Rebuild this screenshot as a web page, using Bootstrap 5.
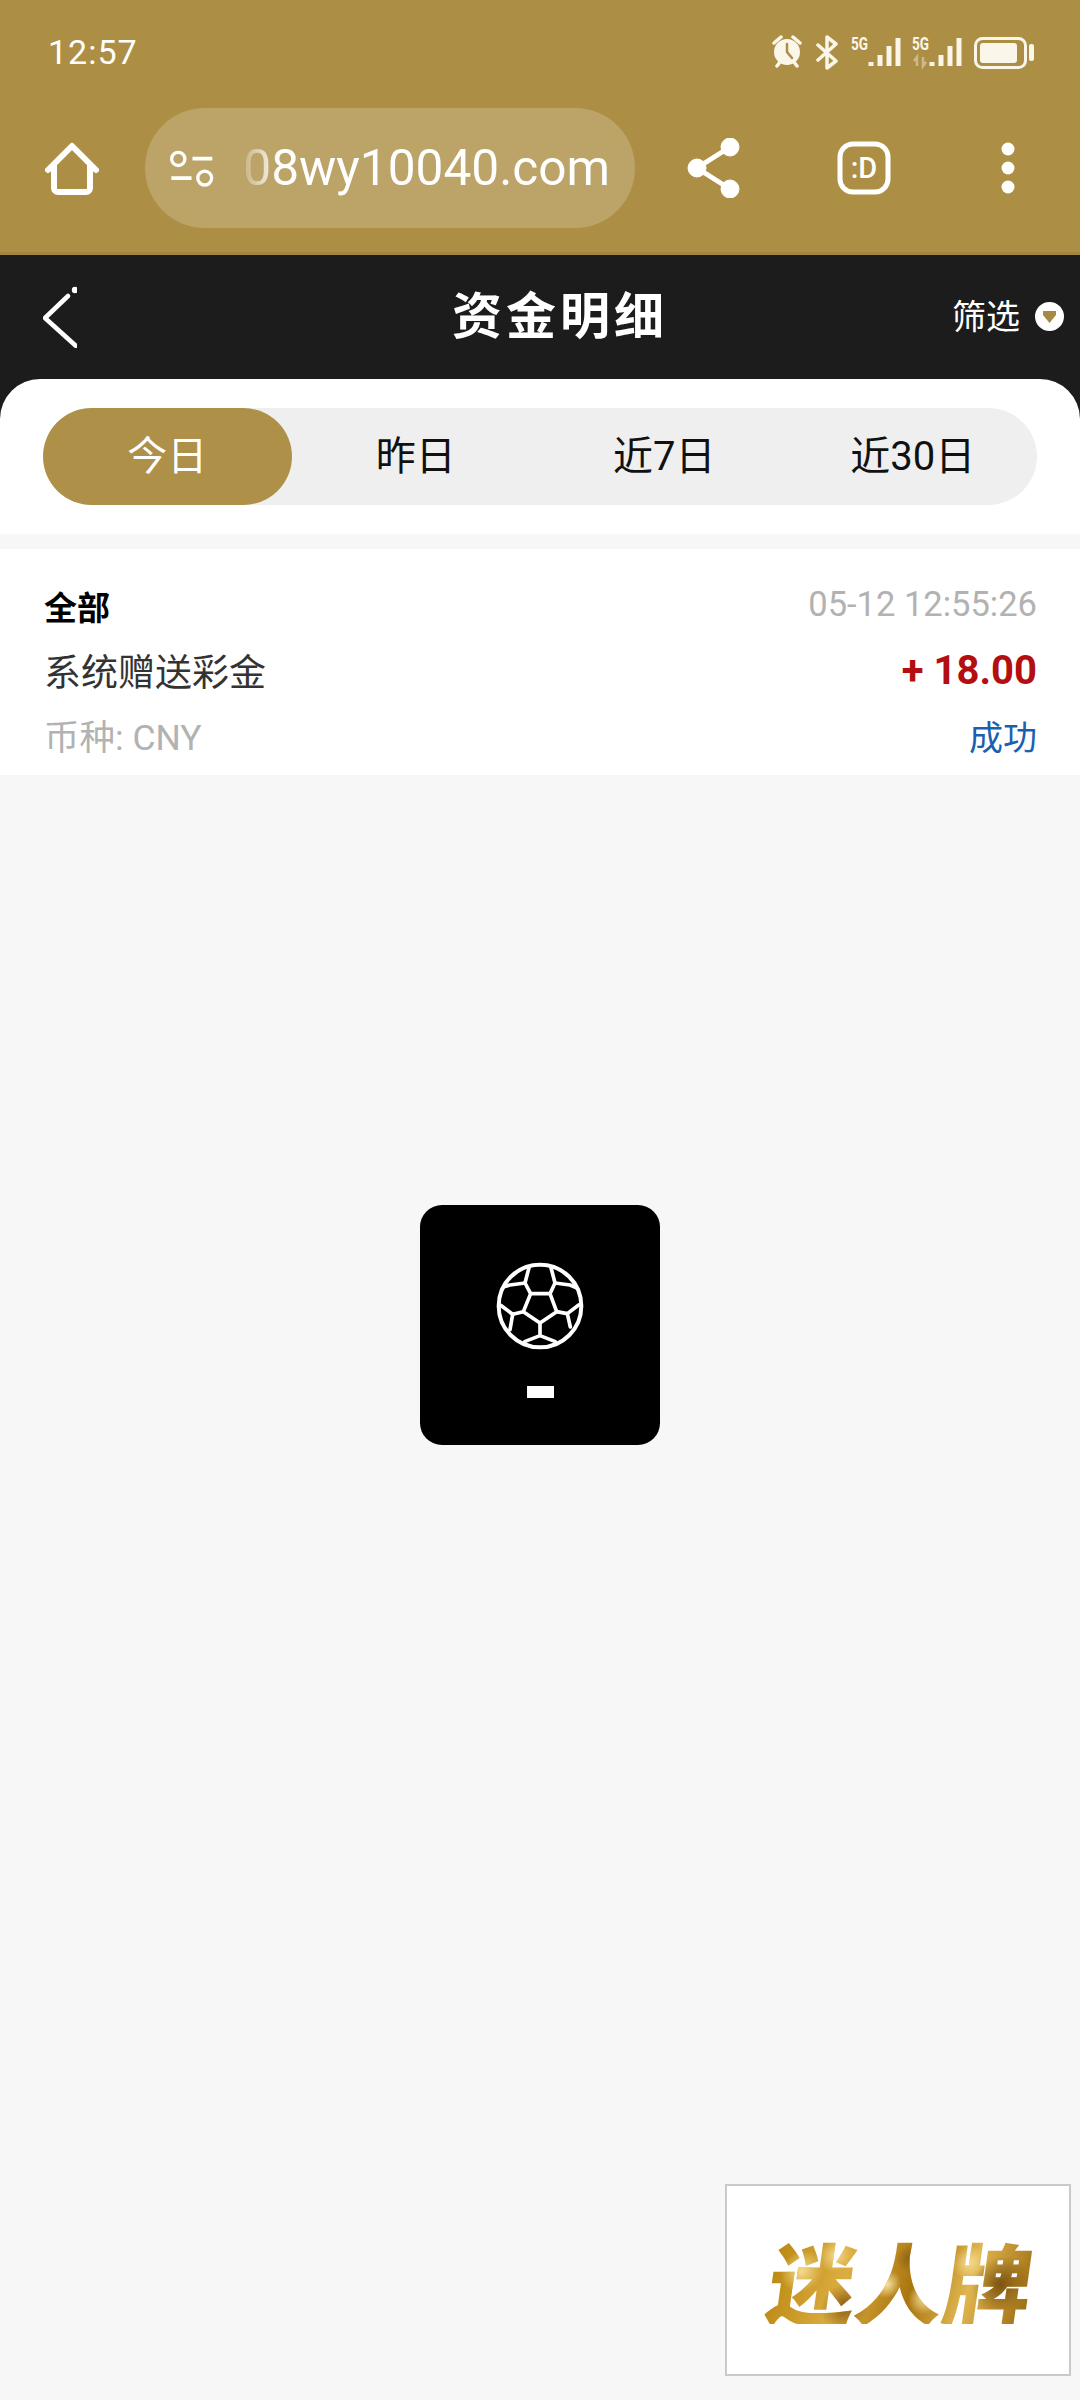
<!DOCTYPE html>
<html lang="zh-CN">
  <head>
    <meta charset="UTF-8" />
    <meta name="viewport" content="width=device-width, initial-scale=1.0" />
    <title>资金明细</title>
    <link href="https://cdn.jsdelivr.net/npm/bootstrap@5.3.3/dist/css/bootstrap.min.css" rel="stylesheet" />
    <style>
      body {
        width: 1080px;
        min-height: 2400px;
        background: #f7f7f7;
        font-family: Roboto, "Noto Sans CJK SC", sans-serif;
        position: relative;
      }
      .gold-top { background: #ad8e45; border-bottom: 3px solid #a38540; color: #fff; }
      .status-row { height: 84px; padding: 36px 46px 0 48px; }
      .clock { font-size: 34px; line-height: 32px; letter-spacing: 1px; }
      .sig-icons { margin-top: -8px; }
      .tool-row { height: 168px; padding: 0 0 0 45px; }
      .url-pill {
        width: 490px; height: 120px; margin-left: 46px; padding: 0 25px 0 23px;
        background: #bca468; border-radius: 60px;
      }
      .url-text {
        width: 372px; margin-left: 24px; font-size: 49.6px; white-space: nowrap; text-align: right;
        -webkit-mask-image: linear-gradient(90deg, #000 0, rgba(0,0,0,.25) 8px, #000 40px);
        mask-image: linear-gradient(90deg, #000 0, rgba(0,0,0,.25) 8px, #000 40px);
      }
      .ic-share { margin-left: 52px; }
      .ic-face { margin-left: 96px; }
      .ic-dots { margin-left: 110px; }
      .head-block { background: #1c1c1c; }
      .title-row { height: 124px; padding: 0 16px 1px 43px; color: #fff; }
      .title-text { margin: 0 0 0 375px; font-size: 50px; font-weight: 700; letter-spacing: 4px; line-height: 1; }
      .filter-text { font-size: 34px; line-height: 1; }
      .filter-dot {
        width: 29px; height: 29px; margin-left: 15px; background: #fff; border-radius: 50%;
      }
      .tabs-wrap { background: #fff; border-radius: 40px 40px 0 0; padding: 29px 43px; }
      .tabs-bar { background: #efefef; border-radius: 49px; height: 97px; }
      .tabs-bar .nav-link {
        height: 97px; line-height: 97px; padding: 0; border-radius: 49px;
        color: #111; font-size: 40px;
      }
      .tabs-bar .nav-link.active { background: #ae9048; color: #fff; }
      .record-row { background: #fff; margin-top: 15px; padding: 27px 43px 4px 44px; height: 226px; }
      .rec-line { height: 65px; }
      .rec-name { font-size: 33px; font-weight: 700; color: #000; }
      .rec-time { font-size: 34.5px; color: #b2b2b2; margin-top: -8px; }
      .rec-desc { font-size: 37px; color: #333; }
      .rec-amount { font-size: 40px; font-weight: 700; color: #b30e10; margin-top: -6px; }
      .rec-coin { font-size: 35.5px; color: #b2b2b2; }
      .rec-state { font-size: 34px; color: #1a5fb0; }
      .load-toast {
        position: absolute; left: 420px; top: 1205px; width: 240px; height: 240px;
        background: #000; border-radius: 22px; padding-top: 56px;
      }
      .load-dash { width: 27px; height: 12px; background: #fff; margin-top: 35px; }
      .ad-box {
        position: absolute; left: 725px; top: 2184px; width: 346px; height: 192px;
        background: #fff; border: 2px solid #c9c9c9; padding-left: 6px;
      }
      .ad-text {
        font-family: "Noto Sans CJK SC", sans-serif; font-size: 88px; font-weight: 900; line-height: 1;
        transform: skewX(-8deg);
        background:
          radial-gradient(circle at 12% 40%, #f6dc8e 0, transparent 9%),
          radial-gradient(circle at 24% 22%, #f3d98c 0, transparent 8%),
          radial-gradient(circle at 45% 55%, #f8e3a0 0, transparent 9%),
          radial-gradient(circle at 60% 70%, #f8e3a0 0, transparent 10%),
          radial-gradient(circle at 75% 30%, #f6dc8e 0, transparent 8%),
          radial-gradient(circle at 88% 55%, #7d5310 0, transparent 12%),
          radial-gradient(circle at 30% 80%, #8a5c12 0, transparent 12%),
          radial-gradient(circle at 52% 25%, #8f6414 0, transparent 9%),
          linear-gradient(100deg, #b8860f, #dcae42 30%, #a9740e 55%, #e0b650 75%, #9a6a10);
        -webkit-background-clip: text;
        background-clip: text;
        color: transparent;
      }
    </style>
  </head>
  <body>
    <div class="gold-top">
      <div class="status-row d-flex justify-content-between align-items-start">
        <div class="clock">12:57</div>
        <!-- alarm, bluetooth, two sims, battery -->
        <svg class="sig-icons" width="262" height="42" viewBox="772 28 262 42" fill="none">
          <g stroke="#fbf6ea" stroke-linecap="round">
            <circle cx="787" cy="52" r="13" fill="#fbf6ea" stroke="none" />
            <path d="M787 44v8l5 6" stroke="#ad8e45" stroke-width="2.5" />
            <path d="M774 43l7-6M800 43l-7-6M777 66l3-4M797 66l-3-4" stroke-width="3.5" />
            <path d="M818 45l18 16-9 7V37l9 7-18 16" stroke-width="3.5" stroke-linejoin="round" />
            <path d="M871 62v4M880 55v11M889 46v20M898 38v28" stroke-width="5" stroke-linecap="butt" />
            <path d="M932 62v4M941 55v11M950 46v20M959 38v28" stroke-width="5" stroke-linecap="butt" />
          </g>
          <text x="851" y="50" fill="#fbf6ea" font-size="18" font-weight="700" font-family="Roboto" textLength="17" lengthAdjust="spacingAndGlyphs">5G</text>
          <text x="912" y="50" fill="#fbf6ea" font-size="18" font-weight="700" font-family="Roboto" textLength="17" lengthAdjust="spacingAndGlyphs">5G</text>
          <path d="M917 66v-9l-3 4M923 57v9l3-4" stroke="#cdb98a" stroke-width="2.5" />
          <rect x="975.5" y="38.5" width="50" height="29" rx="7" stroke="#fbf6ea" stroke-width="3" />
          <rect x="980" y="43" width="37" height="20" rx="3" fill="#fbf6ea" />
          <rect x="1029" y="44" width="5" height="17" rx="2" fill="#fbf6ea" />
        </svg>
      </div>
      <div class="tool-row d-flex align-items-center">
        <svg width="54" height="55" viewBox="0 0 54 55" fill="none" stroke="#fff" stroke-linecap="round" stroke-linejoin="round">
          <path d="M3 29L27 5l24 24" stroke-width="6" />
          <path d="M9 25v22a4 4 0 0 0 4 4h28a4 4 0 0 0 4-4V25" stroke-width="6" />
        </svg>
        <div class="url-pill d-flex align-items-center flex-shrink-0">
          <svg width="47" height="39" viewBox="505 175 140 118" fill="none" stroke="#fff" class="flex-shrink-0">
            <circle cx="535" cy="205" r="20" stroke-width="10" />
            <circle cx="615" cy="263" r="21" stroke-width="10" />
            <path d="M578 204h60M514 263h61" stroke-width="11" />
          </svg>
          <div class="url-text">08wy10040.com</div>
        </div>
        <svg class="ic-share" width="54" height="60" viewBox="0 0 54 60" fill="#fff" stroke="#fff">
          <path d="M43 9L10 30l33 21" fill="none" stroke-width="5" />
          <circle cx="43" cy="9" r="9" />
          <circle cx="10" cy="30" r="9" />
          <circle cx="43" cy="51" r="9" />
        </svg>
        <svg class="ic-face" width="54" height="54" viewBox="0 0 54 54" fill="none">
          <rect x="3" y="3" width="48" height="48" rx="13" stroke="#fff" stroke-width="5" />
          <text x="27" y="37" text-anchor="middle" fill="#fff" font-size="29" font-weight="500" font-family="Roboto">:D</text>
        </svg>
        <svg class="ic-dots" width="14" height="52" viewBox="0 0 14 52" fill="#fff">
          <circle cx="7" cy="7" r="6.5" />
          <circle cx="7" cy="26" r="6.5" />
          <circle cx="7" cy="45" r="6.5" />
        </svg>
      </div>
    </div>

    <div class="head-block">
      <div class="title-row d-flex align-items-center">
        <svg width="34" height="62" viewBox="0 0 34 62" fill="none" stroke="#fff" stroke-width="4.5" stroke-linecap="round" stroke-linejoin="round">
          <path d="M25 10L2 32l31 28" />
          <circle cx="32" cy="4" r="3.2" fill="#fff" stroke="none" />
        </svg>
        <h1 class="title-text">资金明细</h1>
        <div class="ms-auto d-flex align-items-center">
          <span class="filter-text">筛选</span>
          <span class="filter-dot d-flex align-items-center justify-content-center">
            <svg width="15" height="14" viewBox="0 0 15 14"><path d="M1 1h13v4l-6.5 8L1 5z" fill="#a58a45" /></svg>
          </span>
        </div>
      </div>
      <div class="tabs-wrap">
        <ul class="nav nav-justified tabs-bar">
          <li class="nav-item"><a class="nav-link active" href="#">今日</a></li>
          <li class="nav-item"><a class="nav-link" href="#">昨日</a></li>
          <li class="nav-item"><a class="nav-link" href="#">近7日</a></li>
          <li class="nav-item"><a class="nav-link" href="#">近30日</a></li>
        </ul>
      </div>
    </div>

    <div class="record-row">
      <div class="rec-line d-flex justify-content-between align-items-center">
        <span class="rec-name">全部</span>
        <span class="rec-time">05-12 12:55:26</span>
      </div>
      <div class="rec-line d-flex justify-content-between align-items-center">
        <span class="rec-desc">系统赠送彩金</span>
        <span class="rec-amount">+ 18.00</span>
      </div>
      <div class="rec-line d-flex justify-content-between align-items-center">
        <span class="rec-coin">币种: CNY</span>
        <span class="rec-state">成功</span>
      </div>
    </div>

    <div class="load-toast d-flex flex-column align-items-center">
      <svg width="90" height="90" viewBox="255 198 270 270" fill="none" stroke="#fff" stroke-width="11" stroke-linejoin="round" stroke-linecap="round">
        <circle cx="390" cy="333" r="124" stroke-width="12" />
        <path d="M362 296h58l20 54-50 34-50-34z" />
        <path d="M357 218l-12 46 17 32M423 218l12 46-15 32" />
        <path d="M345 264l-45 6-18 5M435 264l45 6 18 8" />
        <path d="M340 350l-32 8-36-27M440 350l32 6 34-26" />
        <path d="M308 358l-8 46M472 356l9 40" />
        <path d="M390 384v38l-46 18M390 422l46 18" />
      </svg>
      <div class="load-dash"></div>
    </div>

    <div class="ad-box d-flex align-items-center justify-content-center">
      <div class="ad-text">迷人牌</div>
    </div>

    <script src="https://cdn.jsdelivr.net/npm/bootstrap@5.3.3/dist/js/bootstrap.bundle.min.js"></script>
  </body>
</html>
